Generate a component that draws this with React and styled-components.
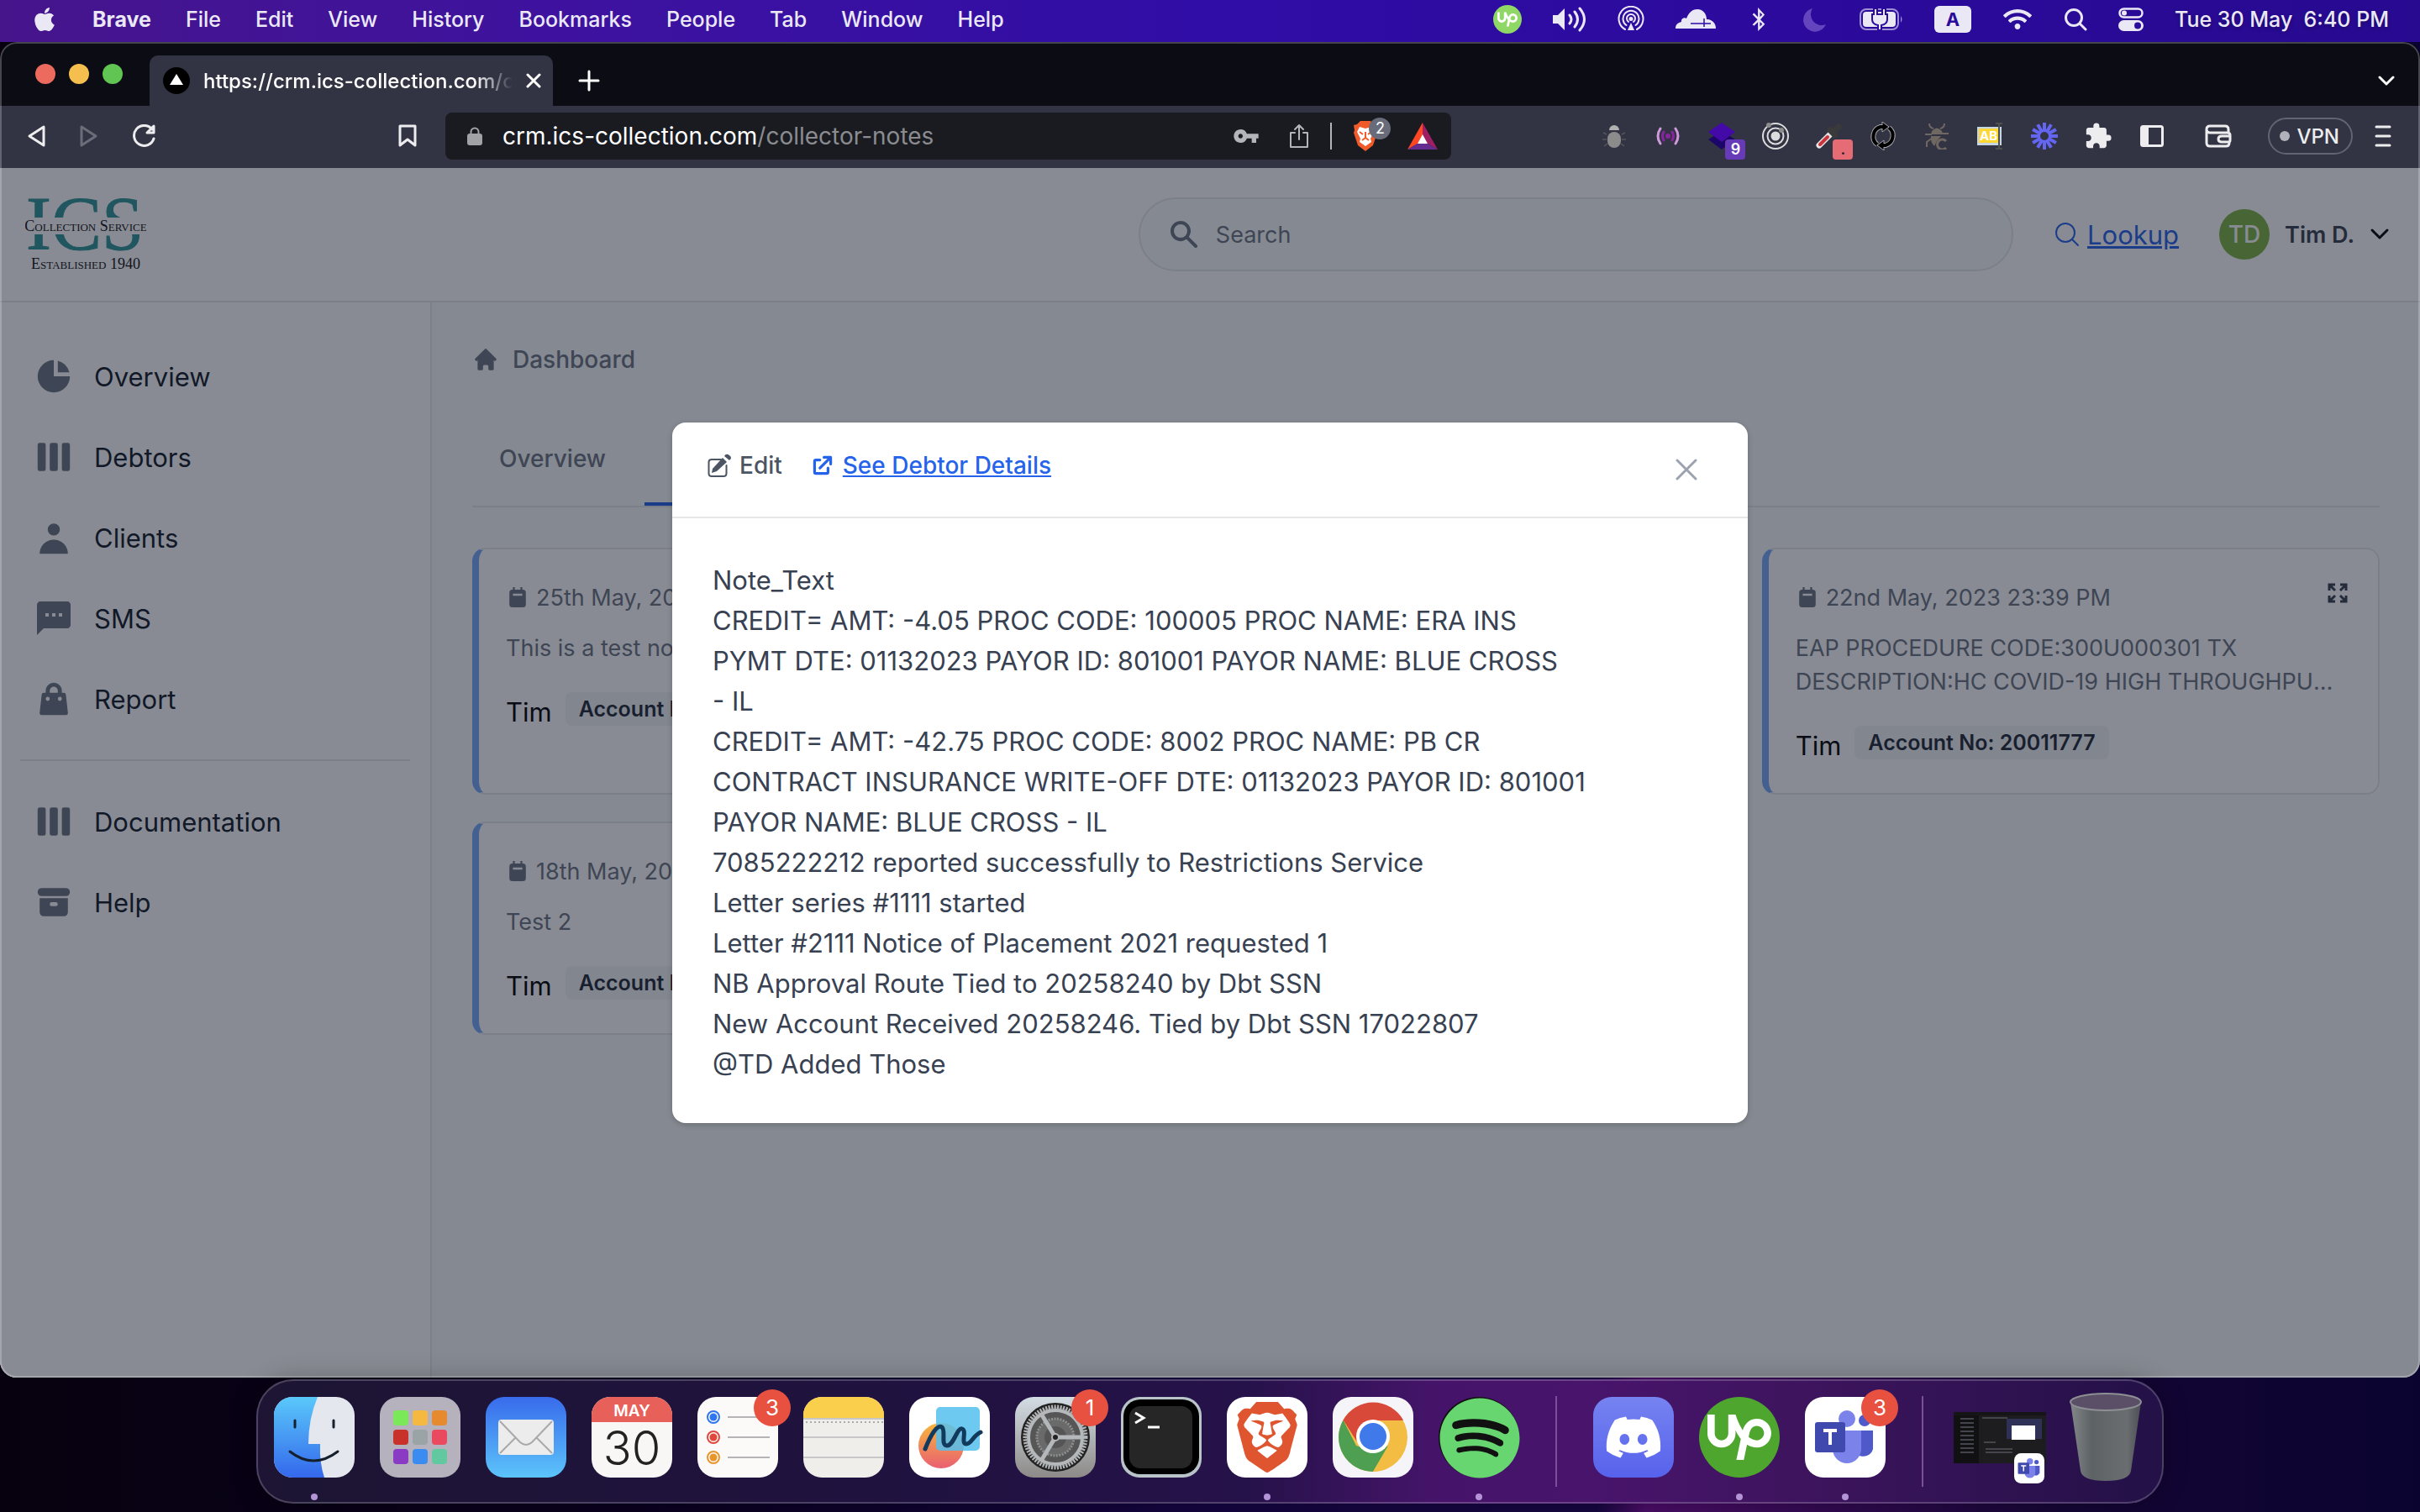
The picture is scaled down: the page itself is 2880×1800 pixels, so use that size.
import React, { useState } from 'react'
import styled, { createGlobalStyle, css } from 'styled-components'
import { FaApple, FaSpotify, FaDiscord, FaBluetoothB, FaWifi } from 'react-icons/fa'
import { SiBrave, SiUpwork } from 'react-icons/si'
import { MdSms, MdVpnKey, MdExtension } from 'react-icons/md'

const menus = ['File', 'Edit', 'View', 'History', 'Bookmarks', 'People', 'Tab', 'Window', 'Help']

const mainLinks = [
    { label: 'Overview', icon: 'pie' },
    { label: 'Debtors', icon: 'boards' },
    { label: 'Clients', icon: 'user' },
    { label: 'SMS', icon: 'sms' },
    { label: 'Report', icon: 'bag' },
]

const moreLinks = [
    { label: 'Documentation', icon: 'boards' },
    { label: 'Help', icon: 'archive' },
]

const notes = [
    { date: '25th May, 2023 20:14 PM', text: 'This is a test note', account: '20011777' },
    { date: '24th May, 2023 18:02 PM', text: 'Note_Text', account: '20258246' },
    {
        date: '22nd May, 2023 23:39 PM',
        text: 'EAP PROCEDURE CODE:300U000301 TX DESCRIPTION:HC COVID-19 HIGH THROUGHPUT TESTING AND REVIEW OF THE SAMPLE',
        account: '20011777',
    },
    { date: '18th May, 2023 20:41 PM', text: 'Test 2', account: '20011777' },
]

const noteLines = [
    'Note_Text',
    'CREDIT= AMT: -4.05 PROC CODE: 100005 PROC NAME: ERA INS',
    'PYMT DTE: 01132023 PAYOR ID: 801001 PAYOR NAME: BLUE CROSS',
    '- IL',
    'CREDIT= AMT: -42.75 PROC CODE: 8002 PROC NAME: PB CR',
    'CONTRACT INSURANCE WRITE-OFF DTE: 01132023 PAYOR ID: 801001',
    'PAYOR NAME: BLUE CROSS - IL',
    '7085222212 reported successfully to Restrictions Service',
    'Letter series #1111 started',
    'Letter #2111 Notice of Placement 2021 requested 1',
    'NB Approval Route Tied to 20258240 by Dbt SSN',
    'New Account Received 20258246. Tied by Dbt SSN 17022807',
    '@TD Added Those',
]

// 20x20 solid icons
const paths = {
    pie: ['M2 10a8 8 0 018-8v8h8a8 8 0 11-16 0z', 'M12 2.252A8.014 8.014 0 0117.748 8H12V2.252z'],
    boards: ['M2 4a1 1 0 011-1h2a1 1 0 011 1v12a1 1 0 01-1 1H3a1 1 0 01-1-1V4zM8 4a1 1 0 011-1h2a1 1 0 011 1v12a1 1 0 01-1 1H9a1 1 0 01-1-1V4zM15 3a1 1 0 00-1 1v12a1 1 0 001 1h2a1 1 0 001-1V4a1 1 0 00-1-1h-2z'],
    user: ['M10 9a3 3 0 100-6 3 3 0 000 6zm-7 9a7 7 0 1114 0H3z'],
    bag: ['M10 2a4 4 0 00-4 4v1H5a1 1 0 00-.994.89l-1 9A1 1 0 004 18h12a1 1 0 00.994-1.11l-1-9A1 1 0 0015 7h-1V6a4 4 0 00-4-4zm2 5V6a2 2 0 10-4 0v1h4zm-6 3a1 1 0 112 0 1 1 0 01-2 0zm7-1a1 1 0 100 2 1 1 0 000-2z'],
    archive: ['M4 3a2 2 0 100 4h12a2 2 0 100-4H4z', 'M3 8h14v7a2 2 0 01-2 2H5a2 2 0 01-2-2V8zm5 3a1 1 0 011-1h2a1 1 0 110 2H9a1 1 0 01-1-1z'],
    home: ['M10.707 2.293a1 1 0 00-1.414 0l-7 7a1 1 0 001.414 1.414L4 10.414V17a1 1 0 001 1h2a1 1 0 001-1v-2a1 1 0 011-1h2a1 1 0 011 1v2a1 1 0 001 1h2a1 1 0 001-1v-6.586l.293.293a1 1 0 001.414-1.414l-7-7z'],
    search: ['M8 4a4 4 0 100 8 4 4 0 000-8zM2 8a6 6 0 1110.89 3.476l4.817 4.817a1 1 0 01-1.414 1.414l-4.816-4.816A6 6 0 012 8z'],
    external: ['M11 3a1 1 0 100 2h2.586l-6.293 6.293a1 1 0 101.414 1.414L15 6.414V9a1 1 0 102 0V4a1 1 0 00-1-1h-5z', 'M5 5a2 2 0 00-2 2v8a2 2 0 002 2h8a2 2 0 002-2v-3a1 1 0 10-2 0v3H5V7h3a1 1 0 000-2H5z'],
    calendar: ['M6 1.5h1.6v2h4.8v-2H14v2h.5A2.5 2.5 0 0117 6v10a2.5 2.5 0 01-2.5 2.5h-9A2.5 2.5 0 013 16V6a2.5 2.5 0 012.5-2.5H6zM6 7v1.8h8V7z'],
}

function Icon({ name, size }) {
    if (name === 'sms') return <MdSms size={size} />
    return (
        <svg width={size} height={size} viewBox="0 0 20 20" fill="currentColor" fillRule="evenodd" aria-hidden="true">
            {paths[name].map((d) => <path key={d} d={d} />)}
        </svg>
    )
}

function Line({ w, h, box, d, stroke = 'currentColor', width = 2 }) {
    return (
        <svg width={w} height={h} viewBox={box} fill="none" stroke={stroke} strokeWidth={width} strokeLinecap="round" strokeLinejoin="round" aria-hidden="true">
            <path d={d} />
        </svg>
    )
}

function StatusIcons() {
    return (
        <>
            <StatusButton $w={34} aria-label="Upwork"><UpDot><SiUpwork size={24} /></UpDot></StatusButton>
            <StatusButton $w={40} aria-label="Sound">
                <svg width="42" height="30" viewBox="0 0 42 30">
                    <path d="M1 10h6l8-8v26l-8-8H1z" fill="#ebe8f6" />
                    <path d="M21 10q4 5 0 10M27 6q7 9 0 18M33 2q11 13 0 26" fill="none" stroke="#ebe8f6" strokeWidth="3" strokeLinecap="round" />
                </svg>
            </StatusButton>
            <StatusButton $w={32} aria-label="AirDrop">
                <svg width="32" height="32" viewBox="0 0 32 32" fill="none" stroke="#ebe8f6" strokeWidth="2">
                    <path d="M9 28a14.5 14.5 0 1114 0M10.5 23a9.5 9.5 0 1111 0M13 19a5 5 0 116 0" strokeLinecap="round" />
                    <circle cx="16" cy="15.5" r="2.5" fill="#ebe8f6" stroke="none" />
                    <path d="M16 20l-4 9h8z" fill="#ebe8f6" stroke="none" />
                </svg>
            </StatusButton>
            <StatusButton $w={48} aria-label="Cloudflare">
                <svg width="48" height="26" viewBox="0 0 48 26">
                    <path d="M0 24c0-5 3-7 7-8-1-4 4-6 6-4C16 4 21 1 26 1c7 0 11 6 11 12 6 0 11 4 11 11z" fill="#ebe8f6" />
                    <path d="M18 18h24M34 12v10" stroke="#2e0ba4" strokeWidth="1.5" />
                </svg>
            </StatusButton>
            <StatusButton $w={28} aria-label="Bluetooth"><FaBluetoothB size={28} /></StatusButton>
            <StatusButton $w={32} $dim aria-label="Focus">
                <svg width="28" height="30" viewBox="0 0 28 30"><path d="M11 2A14 14 0 1027 21 13 13 0 0111 2z" fill="currentColor" /></svg>
            </StatusButton>
            <StatusButton $w={52} aria-label="Battery">
                <svg width="52" height="26" viewBox="0 0 52 26">
                    <rect x="1" y="1" width="45" height="24" rx="7" fill="none" stroke="#9d8fd6" strokeWidth="2" />
                    <rect x="4" y="4" width="39" height="18" rx="4" fill="#ebe8f6" />
                    <path d="M49 9q3 4 0 8z" fill="#9d8fd6" />
                    <path d="M17 0h4v7h6V0h4v7h2v6q0 6-7 7v6h-4v-6q-7-1-7-7V7h2z" fill="#ebe8f6" stroke="#2a0b9c" strokeWidth="2" />
                </svg>
            </StatusButton>
            <StatusButton $w={44} aria-label="Input source"><InputSource>A</InputSource></StatusButton>
            <StatusButton $w={36} aria-label="Wi-Fi"><FaWifi size={34} /></StatusButton>
            <StatusButton $w={28} aria-label="Spotlight">
                <Line w={28} h={28} box="0 0 28 28" d="M2.5 12a9.5 9.5 0 1019 0 9.5 9.5 0 10-19 0M19 19l7 7" width={3} />
            </StatusButton>
            <StatusButton $w={30} aria-label="Control Centre">
                <svg width="30" height="28" viewBox="0 0 30 28">
                    <rect x="1.5" y="1.5" width="27" height="10" rx="5" fill="none" stroke="#ebe8f6" strokeWidth="2.5" />
                    <circle cx="7" cy="6.5" r="3" fill="#ebe8f6" />
                    <rect y="15" width="30" height="13" rx="6.5" fill="#ebe8f6" />
                    <circle cx="23" cy="21.5" r="4" fill="#2a0b9c" />
                </svg>
            </StatusButton>
        </>
    )
}

function Extensions() {
    return (
        <ExtensionRow>
            <ExtButton aria-label="Bug tracker">
                <svg width="28" height="30" viewBox="0 0 28 30">
                    <path d="M5 13l-4-2M5 19H0M6 24l-4 3M23 13l4-2M23 19h5M22 24l4 3" stroke="#55565a" strokeWidth="1.5" />
                    <path d="M8 8a6 6 0 0112 0z" fill="#b0b0b0" />
                    <rect x="6" y="10" width="16" height="19" rx="8" fill="#8b8b8b" />
                </svg>
            </ExtButton>
            <ExtButton aria-label="Broadcast">
                <svg width="28" height="22" viewBox="0 0 28 22" fill="none" strokeWidth="3" strokeLinecap="round">
                    <circle cx="14" cy="11" r="3" fill="#8a24a0" />
                    <path d="M9 6q-3 5 0 10M19 6q3 5 0 10" stroke="#8a24a0" />
                    <path d="M5 2q-6 9 0 18M23 2q6 9 0 18" stroke="#cf9adb" />
                </svg>
            </ExtButton>
            <ExtButton aria-label="Layers">
                <svg width="34" height="34" viewBox="0 0 34 34">
                    <path d="M1 21l16-10 16 10-16 12z" fill="#1c0668" />
                    <path d="M1 12L17 1l16 11-16 12z" fill="#430aa8" />
                </svg>
                <ExtBadge $bg="#673ab7">9</ExtBadge>
            </ExtButton>
            <ExtButton aria-label="Orbit">
                <svg width="34" height="34" viewBox="0 0 34 34" fill="none" stroke="#dcdcdc" strokeWidth="2">
                    <circle cx="17" cy="17" r="15" /><circle cx="17" cy="17" r="9.5" />
                    <circle cx="17" cy="17" r="4.5" fill="#dcdcdc" />
                    <circle cx="9" cy="4" r="3" fill="#8c8c8c" stroke="none" /><circle cx="24" cy="10" r="3" fill="#8c8c8c" stroke="none" />
                </svg>
            </ExtButton>
            <ExtButton aria-label="Colour picker">
                <svg width="32" height="32" viewBox="0 0 32 32" strokeLinecap="round">
                    <path d="M4 27L19 12" stroke="#e6e6e6" strokeWidth="7" />
                    <path d="M5 26L14 17" stroke="#c9353c" strokeWidth="4" />
                    <path d="M17 9l6 6M20 12l7-7" stroke="#3a3a3a" strokeWidth="7" />
                </svg>
                <ExtBadge $bg="#e56b75" $dark>.</ExtBadge>
            </ExtButton>
            <ExtButton aria-label="Refresh cache">
                <svg width="32" height="34" viewBox="0 0 32 34" fill="none">
                    <path d="M9 27A12 12 0 0113 6h5M23 7a12 12 0 01-4 21h-5" stroke="#a5a6ac" strokeWidth="6" />
                    <path d="M15 0l8 6-8 6zM17 22l-8 6 8 6z" fill="#000" stroke="#a5a6ac" />
                    <path d="M9 27A12 12 0 0113 6h5M23 7a12 12 0 01-4 21h-5" stroke="#000" strokeWidth="4" />
                </svg>
            </ExtButton>
            <ExtButton aria-label="Debugger">
                <svg width="30" height="32" viewBox="0 0 30 32" fill="none" stroke="#6f6761" strokeWidth="2">
                    <path d="M6 1q0 5 5 6M24 1q0 5-5 6M9 14H1M10 18l-7 5v6M21 13h8" />
                    <path d="M9 10q6-7 12 0l1 4H8zM8 16h12l-5 6-3 6q-5-5-4-12z" fill="#6f6761" stroke="none" />
                    <path d="M26 22a6 6 0 100 8" strokeWidth="3" />
                </svg>
            </ExtButton>
            <ExtButton aria-label="Text tool">
                <svg width="32" height="32" viewBox="0 0 32 32">
                    <rect y="5" width="29" height="22" fill="#c6d5e4" /><rect x="2" y="7" width="25" height="17" fill="#fdd835" />
                    <text x="3" y="21" fontFamily="Inter, sans-serif" fontSize="15" fontWeight="700" fill="#fff">AB</text>
                    <path d="M22 1h8M26 1v30M22 31h8" stroke="#4d5150" strokeWidth="2" />
                </svg>
            </ExtButton>
            <ExtButton aria-label="Loom">
                <svg width="32" height="32" viewBox="0 0 32 32" stroke="#6466f1" strokeWidth="4">
                    {[0, 30, 60, 90, 120, 150, 180, 210, 240, 270, 300, 330].map((a) => (
                        <path key={a} d="M16 0v10" transform={`rotate(${a} 16 16)`} />
                    ))}
                    <circle cx="16" cy="16" r="6.5" fill="none" strokeWidth="3" />
                </svg>
            </ExtButton>
            <ExtButton aria-label="Extensions"><MdExtension size={34} /></ExtButton>
            <ExtButton aria-label="Side panel">
                <svg width="28" height="26" viewBox="0 0 28 26"><rect x="1.5" y="1.5" width="25" height="23" rx="2" fill="none" stroke="#ededef" strokeWidth="3" /><rect x="2" y="2" width="8" height="22" fill="#ededef" /></svg>
            </ExtButton>
            <ExtButton $wide aria-label="Wallet">
                <svg width="32" height="28" viewBox="0 0 32 28" fill="none" stroke="#ededef" strokeWidth="3">
                    <path d="M28 9V6q0-4-4-4H6Q2 2 2 6v16q0 4 4 4h19q4 0 4-4M2 7q1 3 4 3h21q3 0 3 3v6q0 2-2 2h-8q-4 0-4-3.5T20 14h10" />
                </svg>
            </ExtButton>
        </ExtensionRow>
    )
}

function Logo() {
    return (
        <svg width="144" height="92" viewBox="0 0 144 92" role="img" aria-label="ICS Collection Service" fontFamily="'Liberation Serif', serif">
            <text x="71" y="64" textAnchor="middle" fontSize="90" fill="#2f9496" stroke="#2f9496" strokeWidth="1">ICS</text>
            <rect y="26" width="144" height="20" fill="#fff" />
            <text x="72" y="42" textAnchor="middle" fontSize="18" fill="#111" style={{ fontVariant: 'small-caps' }}>Collection Service</text>
            <text x="72" y="87" textAnchor="middle" fontSize="18" fill="#111" style={{ fontVariant: 'small-caps' }}>Established 1940</text>
        </svg>
    )
}

function NoteCard({ note }) {
    return (
        <Card>
            <CardTop>
                <CardDate><Icon name="calendar" size={28} />{note.date}</CardDate>
                <ExpandButton aria-label="Expand note">
                    <svg width="24" height="24" viewBox="0 0 24 24" fill="none" stroke="#374151" strokeWidth="3">
                        <path d="M2 9V2h7M2 2l7 7M15 2h7v7M22 2l-7 7M2 15v7h7M2 22l7-7M22 15v7h-7M22 22l-7-7" />
                    </svg>
                </ExpandButton>
            </CardTop>
            <CardText>{note.text}</CardText>
            <CardFoot>
                <span>Tim</span>
                <AccountTag>Account No: {note.account}</AccountTag>
            </CardFoot>
        </Card>
    )
}

function Teams({ size }) {
    return (
        <svg width={size} height={size} viewBox="0 0 96 96">
            <rect width="96" height="96" rx="22" fill="#fff" />
            <circle cx="71" cy="28" r="7" fill="#5059c9" />
            <path d="M58 40h23v22a12 12 0 01-18 7z" fill="#5059c9" />
            <circle cx="50" cy="26" r="10" fill="#7b83eb" />
            <path d="M33 40h34v22a17 17 0 01-34 0z" fill="#7b83eb" />
            <rect x="12" y="30" width="36" height="36" rx="3" fill="#4049ad" />
            <path d="M22 40h16M30 40v17" stroke="#fff" strokeWidth="4" />
        </svg>
    )
}

function Art({ children }) {
    return <svg width="96" height="96" viewBox="0 0 96 96">{children}</svg>
}

const Tile = styled.span`
    width: 96px;
    height: 96px;
    border-radius: ${(p) => (p.$round ? '50%' : '22px')};
    display: grid;
    place-items: center;
    background: ${(p) => p.$bg};
    color: ${(p) => p.$color};
`

const launchColors = ['#7be85a', '#f5b942', '#e58a2e', '#c8322a', '#9aa3a6', '#ea4a60', '#8a3bc4', '#3b8cf0', '#62c8a0']

const dockApps = [
    {
        name: 'Finder', running: true, art: (
            <Art>
                <defs>
                    <linearGradient id="finderBlue" x1="0" y1="0" x2="0" y2="1"><stop offset="0" stopColor="#5ac8fa" /><stop offset="1" stopColor="#3468ec" /></linearGradient>
                    <clipPath id="finderClip"><rect width="96" height="96" rx="22" /></clipPath>
                </defs>
                <g clipPath="url(#finderClip)">
                    <rect width="96" height="96" fill="#e4e7ed" />
                    <path d="M0 0h52Q41 26 41 56h14q-1 22 5 40H0z" fill="url(#finderBlue)" />
                </g>
                <path d="M25 28v8M71 28v8M19 65q28 22 57 0" fill="none" stroke="#16202c" strokeWidth="3" strokeLinecap="round" />
            </Art>
        )
    },
    {
        name: 'Launchpad', art: (
            <Art>
                <rect width="96" height="96" rx="22" fill="#b5b2bd" />
                {launchColors.map((c, i) => <rect key={c} x={16 + (i % 3) * 23} y={16 + Math.floor(i / 3) * 23} width="18" height="18" rx="4" fill={c} />)}
            </Art>
        )
    },
    {
        name: 'Mail', art: (
            <Art>
                <defs><linearGradient id="mailBg" x1="0" y1="0" x2="0" y2="1"><stop offset="0" stopColor="#386bec" /><stop offset="1" stopColor="#5cc4fa" /></linearGradient></defs>
                <rect width="96" height="96" rx="22" fill="url(#mailBg)" />
                <rect x="15" y="27" width="66" height="42" rx="4" fill="#ececec" />
                <path d="M17 67l19-19M79 67L60 48M17 29l24 25q7 6 14 0l24-25" fill="none" stroke="#a9a9a9" strokeWidth="2" />
            </Art>
        )
    },
    {
        name: 'Calendar', art: (
            <Art>
                <rect width="96" height="96" rx="22" fill="#f8f7f5" />
                <path d="M0 30v-8A22 22 0 0122 0h52a22 22 0 0122 22v8z" fill="#e8605a" />
                <text x="48" y="23" textAnchor="middle" fontFamily="Inter, sans-serif" fontSize="19" fontWeight="600" fill="#fff">MAY</text>
                <text x="48" y="81" textAnchor="middle" fontFamily="Inter, sans-serif" fontSize="56" fontWeight="300" fill="#222">30</text>
            </Art>
        )
    },
    {
        name: 'Reminders', badge: 3, art: (
            <Art>
                <rect width="96" height="96" rx="22" fill="#fbfaf8" />
                {['#2f76f0', '#e0483e', '#e8952c'].map((c, i) => (
                    <g key={c}>
                        <circle cx="19" cy={24 + i * 24} r="7" fill="none" stroke={c} strokeWidth="2" />
                        <circle cx="19" cy={24 + i * 24} r="4.5" fill={c} />
                        <path d={`M36 ${24 + i * 24}h50`} stroke="#b5b5b8" strokeWidth="2" />
                    </g>
                ))}
            </Art>
        )
    },
    {
        name: 'Notes', art: (
            <Art>
                <rect width="96" height="96" rx="22" fill="#efeeea" />
                <path d="M0 25v-3A22 22 0 0122 0h52a22 22 0 0122 22v3z" fill="#f9cf4b" />
                <path d="M0 26h96M0 48h96M0 72h96" stroke="#c9c8c8" strokeWidth="2" />
                <path d="M3 30h92" stroke="#aaa" strokeWidth="2" strokeDasharray="2 3" />
            </Art>
        )
    },
    {
        name: 'Freeform', art: (
            <Art>
                <defs><linearGradient id="freeBall" x1="0" y1="0" x2="0" y2="1"><stop offset="0" stopColor="#f6b73c" /><stop offset="1" stopColor="#ea5f72" /></linearGradient></defs>
                <rect width="96" height="96" rx="22" fill="#fff" />
                <circle cx="38" cy="58" r="27" fill="url(#freeBall)" />
                <rect x="32" y="12" width="52" height="52" rx="5" fill="#55bfee" opacity="0.85" />
                <path d="M19 62C26 44 34 32 39 36s-2 22 6 22 12-22 18-20-2 18 5 18c6 0 8-10 17-14" fill="none" stroke="#123a5c" strokeWidth="5" strokeLinecap="round" />
            </Art>
        )
    },
    {
        name: 'System Settings', badge: 1, art: (
            <Art>
                <defs><linearGradient id="setBg" x1="0" y1="0" x2="0" y2="1"><stop offset="0" stopColor="#d3dde4" /><stop offset="1" stopColor="#8d8a88" /></linearGradient></defs>
                <rect width="96" height="96" rx="22" fill="url(#setBg)" />
                <circle cx="48" cy="48" r="41" fill="#222" />
                <circle cx="48" cy="48" r="36" fill="#565656" stroke="#b5b8ba" strokeWidth="5" strokeDasharray="2 1.5" />
                <circle cx="48" cy="48" r="32" fill="none" stroke="#b5b8ba" strokeWidth="4" />
                <circle cx="48" cy="48" r="22" fill="#6a6a6a" stroke="#8d8f90" strokeWidth="3" strokeDasharray="2 1.5" />
                <circle cx="48" cy="48" r="13" fill="#555" />
                <path d="M48 48h33M48 48L31 20M48 48L31 76" stroke="#b5b8ba" strokeWidth="5" />
                <circle cx="48" cy="48" r="4" fill="#222" stroke="#b5b8ba" strokeWidth="2" />
            </Art>
        )
    },
    {
        name: 'Terminal', art: (
            <Art>
                <rect width="96" height="96" rx="22" fill="#b9c4c9" />
                <rect x="3" y="3" width="90" height="89" rx="20" fill="#000" />
                <rect x="10" y="11" width="75" height="74" rx="13" fill="#262626" />
                <path d="M17 19l10 6-10 6M32 36h14" fill="none" stroke="#fff" strokeWidth="3" />
            </Art>
        )
    },
    {
        name: 'Brave', running: true, art: (
            <Tile $bg="#fff" $color="#df5530"><SiBrave size={84} /></Tile>
        )
    },
    {
        name: 'Chrome', art: (
            <Art>
                <rect width="96" height="96" rx="22" fill="#f5f4f8" />
                <circle cx="48" cy="48" r="41" fill="#f2bd42" />
                <path d="M48 48l36-20.5A41 41 0 0012.500 27.500L28 52z" fill="#d8493a" />
                <path d="M12.500 27.500A41 41 0 0048 89l19-31-19 7-20-7z" fill="#4f9f52" />
                <path d="M48 28h35a41 41 0 01-35 61l18-31z" fill="#f2bd42" />
                <circle cx="48" cy="47" r="20" fill="#fff" />
                <circle cx="48" cy="47" r="16" fill="#4079ea" />
            </Art>
        )
    },
    {
        name: 'Spotify', running: true, art: (
            <Tile $bg="#111" $color="#67d671" $round><FaSpotify size={98} /></Tile>
        )
    },
]

const dockExtra = [
    { name: 'Discord', art: <Tile $bg="linear-gradient(#7683f0, #5762ec)" $color="#fff"><FaDiscord size={70} /></Tile> },
    { name: 'Upwork', running: true, art: <Tile $bg="#4fa62f" $color="#fff" $round><SiUpwork size={76} /></Tile> },
    { name: 'Microsoft Teams', running: true, badge: 3, art: <Teams size={96} /> },
]

function DockItem({ app }) {
    return (
        <DockButton aria-label={app.name}>
            {app.art}
            {app.badge && <DockBadge>{app.badge}</DockBadge>}
            {app.running && <RunningDot />}
        </DockButton>
    )
}

function App() {
    const [open, setOpen] = useState(true)
    const [query, setQuery] = useState('')

    return (
        <Desktop>
            <GlobalStyle />
            <MenuBar>
                <MenuList>
                    <MenuButton aria-label="Apple"><FaApple size={32} /></MenuButton>
                    <MenuButton $bold>Brave</MenuButton>
                    {menus.map((m) => <MenuButton key={m}>{m}</MenuButton>)}
                </MenuList>
                <StatusList>
                    <StatusIcons />
                    <Clock>Tue 30 May&nbsp; 6:40 PM</Clock>
                </StatusList>
            </MenuBar>

            <BrowserWindow>
                <TabStrip>
                    <Lights>
                        <Light $c="#ed6a5e" aria-label="Close window" />
                        <Light $c="#f5bf4f" aria-label="Minimise window" />
                        <Light $c="#61c554" aria-label="Zoom window" />
                    </Lights>
                    <BrowserTab>
                        <svg width="32" height="32" viewBox="0 0 32 32"><circle cx="16" cy="16" r="16" fill="#000" /><path d="M16 8l8 13H8z" fill="#fff" /></svg>
                        <TabTitle>https://crm.ics-collection.com/c</TabTitle>
                        <IconButton aria-label="Close tab"><Line w={18} h={18} box="0 0 18 18" d="M2 2l14 14M16 2L2 16" width={3} /></IconButton>
                    </BrowserTab>
                    <IconButton aria-label="New tab"><Line w={26} h={26} box="0 0 26 26" d="M13 2v22M2 13h22" width={3} /></IconButton>
                    <TabSearch aria-label="Search tabs"><Line w={20} h={12} box="0 0 20 12" d="M2 2l8 8 8-8" width={3} /></TabSearch>
                </TabStrip>

                <Toolbar>
                    <NavGroup>
                        <IconButton aria-label="Back"><Line w={22} h={26} box="0 0 22 26" d="M20 2v22L3 13z" width={3} /></IconButton>
                        <IconButton $dim aria-label="Forward"><Line w={22} h={26} box="0 0 22 26" d="M2 2v22l17-11z" width={3} /></IconButton>
                        <IconButton aria-label="Reload"><Line w={28} h={28} box="0 0 28 28" d="M25 17A12 12 0 1123 6M25 2v8h-8z" width={3} /></IconButton>
                        <BookmarkButton aria-label="Bookmark"><Line w={22} h={28} box="0 0 22 28" d="M2 2h18v23l-9-7-9 7z" width={3} /></BookmarkButton>
                    </NavGroup>
                    <AddressBar>
                        <svg width="18" height="22" viewBox="0 0 18 22"><rect y="8" width="18" height="14" rx="3" fill="#a0a2a6" /><path d="M4.5 9V6a4.5 4.5 0 019 0v3" fill="none" stroke="#a0a2a6" strokeWidth="2" /></svg>
                        <Url><b>crm.ics-collection.com</b>/collector-notes</Url>
                        <KeyButton $grey aria-label="Passwords"><MdVpnKey size={32} /></KeyButton>
                        <IconButton $grey aria-label="Share"><Line w={26} h={30} box="0 0 26 30" d="M8 11H3v17h20V11h-5M13 19V2M8 7l5-5 5 5" width={2} /></IconButton>
                        <Rule />
                        <Shield aria-label="Brave Shields">
                            <svg width="32" height="36" viewBox="0 0 32 36">
                                <path d="M6 4l4-4h12l4 4 4 1-1 6 1 3-5 15-9 7-9-7L2 14l1-3-1-6z" fill="#f15a29" />
                                <path d="M9 7l7 2 7-2 3 6-4 8 1 4-7 5-7-5 1-4-4-8z" fill="#fff" />
                                <path d="M16 13v7M9 13l4 3M23 13l-4 3M12 23l4-3 4 3" stroke="#f15a29" strokeWidth="2" fill="none" />
                            </svg>
                            <ShieldCount>2</ShieldCount>
                        </Shield>
                        <IconButton aria-label="Rewards">
                            <svg width="36" height="32" viewBox="0 0 36 32"><path d="M18 0L0 32l12-7 6-10z" fill="#ff4724" /><path d="M18 0l18 32-12-7-6-10z" fill="#9e1f63" /><path d="M0 32h36l-12-7H12z" fill="#662d91" /><path d="M18 14l6 11H12z" fill="#fff" /></svg>
                        </IconButton>
                    </AddressBar>
                    <Extensions />
                    <Vpn><i />VPN</Vpn>
                    <IconButton aria-label="Menu"><Line w={20} h={26} box="0 0 20 26" d="M2 2h16M2 13h16M2 24h16" width={3} /></IconButton>
                </Toolbar>

                <Page>
                    <PageHeader>
                        <a href="#home"><Logo /></a>
                        <SearchBox>
                            <Icon name="search" size={40} />
                            <input type="text" aria-label="Search" placeholder="Search" value={query} onChange={(e) => setQuery(e.target.value)} />
                        </SearchBox>
                        <Lookup href="#lookup">
                            <Line w={32} h={32} box="0 0 32 32" d="M3 14a11 11 0 1022 0 11 11 0 10-22 0M22 22l7 7" width={2} />
                            <span>Lookup</span>
                        </Lookup>
                        <Profile>
                            <Avatar>TD</Avatar>
                            Tim D.
                            <Line w={24} h={16} box="0 0 24 16" d="M3 3l9 9 9-9" stroke="#000" width={3} />
                        </Profile>
                    </PageHeader>

                    <Columns>
                        <Sidebar>
                            <NavList>
                                {mainLinks.map((l) => (
                                    <li key={l.label}><NavLink href={`#${l.label}`}><Icon name={l.icon} size={48} />{l.label}</NavLink></li>
                                ))}
                            </NavList>
                            <NavList $ruled>
                                {moreLinks.map((l) => (
                                    <li key={l.label}><NavLink href={`#${l.label}`}><Icon name={l.icon} size={48} />{l.label}</NavLink></li>
                                ))}
                            </NavList>
                        </Sidebar>
                        <Main>
                            <Breadcrumb href="#dashboard"><Icon name="home" size={32} />Dashboard</Breadcrumb>
                            <PageTabs>
                                <PageTab>Overview</PageTab>
                                <PageTab $active>Notes</PageTab>
                            </PageTabs>
                            <Cards>
                                {notes.map((n) => <NoteCard key={n.date} note={n} />)}
                            </Cards>
                        </Main>
                    </Columns>

                    {open && (
                        <Overlay>
                            <Modal role="dialog" aria-label="Note">
                                <ModalHeader>
                                    <EditButton>
                                        <svg width="28" height="28" viewBox="0 0 28 28" fill="none" stroke="currentColor" strokeWidth="2">
                                            <path d="M16 7H5Q1.5 7 1.5 10v13.500Q1.5 27 5 27h14q3.500 0 3.500-3.500V14" strokeLinecap="round" />
                                            <path d="M6 18L18 5l5 5L11 21l-6 2z" fill="currentColor" stroke="none" />
                                            <path d="M20 3q2-4 6-1t0 6z" fill="currentColor" stroke="none" />
                                        </svg>
                                        Edit
                                    </EditButton>
                                    <DetailsLink href="#debtor"><Icon name="external" size={32} /><span>See Debtor Details</span></DetailsLink>
                                    <CloseButton aria-label="Close" onClick={() => setOpen(false)}>
                                        <Line w={26} h={26} box="0 0 26 26" d="M2 2l22 22M24 2L2 24" width={3} />
                                    </CloseButton>
                                </ModalHeader>
                                <ModalBody>
                                    {noteLines.map((l) => <p key={l}>{l}</p>)}
                                </ModalBody>
                            </Modal>
                        </Overlay>
                    )}
                </Page>
            </BrowserWindow>

            <DockArea>
                <Dock>
                    {dockApps.map((a) => <DockItem key={a.name} app={a} />)}
                    <DockRule />
                    {dockExtra.map((a) => <DockItem key={a.name} app={a} />)}
                    <DockRule />
                    <DockButton aria-label="Minimised window">
                        <svg width="110" height="96" viewBox="0 0 110 96">
                            <rect y="18" width="110" height="61" fill="#1d1d1f" />
                            <rect y="18" width="30" height="61" fill="#111113" />
                            <rect y="18" width="110" height="4" fill="#151517" />
                            {[26, 31, 36, 41, 46, 51, 56, 61, 66].map((y) => <path key={y} d={`M8 ${y}h16`} stroke="#44454c" strokeWidth="2" />)}
                            <path d="M34 25h30M36 54h14M38 62h32M38 66h32" stroke="#44454c" strokeWidth="2" />
                            <rect x="63" y="26" width="42" height="24" fill="#2f3055" />
                            <rect x="69" y="34" width="28" height="17" fill="#fff" />
                        </svg>
                        <MiniApp><Teams size={36} /></MiniApp>
                    </DockButton>
                    <DockButton aria-label="Bin">
                        <svg width="86" height="106" viewBox="0 0 86 106">
                            <defs><linearGradient id="bin"><stop offset="0" stopColor="#83878a" /><stop offset="0.3" stopColor="#5d6265" /><stop offset="0.8" stopColor="#6a6e71" /><stop offset="1" stopColor="#4b4e52" /></linearGradient></defs>
                            <path d="M1 11l12 82q2 12 30 12t30-12l12-82z" fill="url(#bin)" />
                            <ellipse cx="43" cy="11" rx="42" ry="10" fill="#5b4f68" stroke="#8d8f94" strokeWidth="2" />
                        </svg>
                    </DockButton>
                </Dock>
            </DockArea>
        </Desktop>
    )
}

const GlobalStyle = createGlobalStyle`
    *{
        box-sizing: border-box;
    }
    body{
        margin: 0;
        font-family: Inter, "Liberation Sans", sans-serif;
    }
    button{
        font: inherit;
        color: inherit;
        background: none;
        border: 0;
        padding: 0;
        cursor: pointer;
    }
    svg{
        display: block;
        flex: none;
    }
    p, ul{
        margin: 0;
        padding: 0;
        list-style: none;
    }
`

const Desktop = styled.div`
    min-height: 100vh;
    display: flex;
    flex-direction: column;
    background: linear-gradient(90deg, #07010f 0%, #0a0220 28%, #140540 50%, #16063f 66%, #4a0d66 68%, #30094f 76%, #150635 85%, #0a0330 100%);
`

const MenuBar = styled.header`
    height: 50px;
    padding: 0 37px 4px;
    display: flex;
    align-items: center;
    justify-content: space-between;
    color: #ebe8f6;
    font-size: 25px;
    font-weight: 500;
    background: linear-gradient(90deg, #46158c 0%, #3d12a0 25%, #300da6 50%, #2b0a9c 75%, #270a90 100%);
    text-shadow: 0 2px 4px rgba(0, 0, 0, 0.3);
`

const MenuList = styled.nav`
    display: flex;
    align-items: center;
    gap: 41px;
`

const MenuButton = styled.button`
    font-weight: ${(p) => (p.$bold ? 700 : 500)};
    white-space: nowrap;
`

const StatusList = styled.div`
    display: flex;
    align-items: center;
    gap: 37px;
`

const StatusButton = styled.button`
    width: ${(p) => p.$w}px;
    display: flex;
    justify-content: center;
    color: ${(p) => (p.$dim ? '#6445bd' : '#ebe8f6')};
`

const UpDot = styled.span`
    width: 34px;
    height: 34px;
    border-radius: 50%;
    display: grid;
    place-items: center;
    background: #8fd866;
    color: #fff;
`

const InputSource = styled.span`
    width: 44px;
    height: 32px;
    border-radius: 6px;
    background: #ebe8f6;
    color: #2a0b9c;
    font-size: 22px;
    font-weight: 700;
    line-height: 32px;
    text-shadow: none;
`

const Clock = styled.time`
    white-space: nowrap;
`

const BrowserWindow = styled.section`
    flex: 1;
    display: flex;
    flex-direction: column;
    position: relative;
    border-radius: 20px;
    overflow: hidden;
    background: #0b0c14;
    &::after{
        content: "";
        position: absolute;
        inset: 0;
        border: 2px solid rgba(255, 255, 255, 0.24);
        border-radius: 20px;
        pointer-events: none;
    }
`

const TabStrip = styled.div`
    height: 76px;
    padding: 16px 30px 0 42px;
    display: flex;
    align-items: center;
    color: #fff;
`

const Lights = styled.div`
    display: flex;
    gap: 16px;
    margin-right: 32px;
    padding-bottom: 16px;
`

const Light = styled.button`
    width: 24px;
    height: 24px;
    border-radius: 50%;
    background: ${(p) => p.$c};
`

const BrowserTab = styled.div`
    width: 480px;
    height: 60px;
    padding: 0 14px 0 16px;
    margin-right: 30px;
    display: flex;
    align-items: center;
    gap: 16px;
    border-radius: 10px 10px 0 0;
    background: #323443;
`

const TabTitle = styled.span`
    flex: 1;
    overflow: hidden;
    white-space: nowrap;
    font-size: 24px;
    font-weight: 500;
    mask-image: linear-gradient(90deg, #000 88%, transparent 100%);
`

const TabSearch = styled.button`
    margin-left: auto;
`

const Toolbar = styled.div`
    height: 74px;
    padding: 0 34px 2px 32px;
    display: flex;
    align-items: center;
    color: #ededef;
    background: #323443;
`

const IconButton = styled.button`
    ${(p) => p.$dim && css`color: #6b6d79;`}
    ${(p) => p.$grey && css`color: #b4b5b9;`}
`

const KeyButton = styled(IconButton)`
    margin-right: 10px;
`

const NavGroup = styled.div`
    width: 464px;
    margin-right: 34px;
    display: flex;
    align-items: center;
    gap: 41px;
`

const BookmarkButton = styled.button`
    margin-left: auto;
`

const AddressBar = styled.div`
    flex: 1;
    height: 56px;
    margin-right: 162px;
    padding: 0 16px 0 26px;
    display: flex;
    align-items: center;
    gap: 24px;
    border-radius: 8px;
    background: #191b20;
`

const Url = styled.span`
    flex: 1;
    color: #8b8c90;
    font-size: 28px;
    white-space: nowrap;
    b{
        color: #fff;
        font-weight: 400;
    }
`

const Rule = styled.span`
    width: 2px;
    height: 32px;
    background: #b4b5b9;
`

const Shield = styled.button`
    position: relative;
    margin-right: 10px;
`

const ShieldCount = styled.span`
    position: absolute;
    top: -4px;
    left: 20px;
    width: 26px;
    height: 26px;
    border-radius: 50%;
    background: #686b7a;
    color: #fff;
    font-size: 18px;
    line-height: 26px;
`

const ExtensionRow = styled.div`
    display: flex;
    align-items: center;
`

const ExtButton = styled.button`
    position: relative;
    width: ${(p) => (p.$wide ? 94 : 64)}px;
    height: 56px;
    display: grid;
    place-items: center;
`

const ExtBadge = styled.span`
    position: absolute;
    right: 4px;
    bottom: 0;
    width: 24px;
    height: 24px;
    border-radius: 4px;
    background: ${(p) => p.$bg};
    color: ${(p) => (p.$dark ? '#222' : '#fff')};
    font-size: 18px;
    font-weight: 600;
    line-height: 24px;
`

const Vpn = styled.button`
    height: 44px;
    padding: 0 14px 0 12px;
    margin: 0 26px 0 12px;
    display: flex;
    align-items: center;
    gap: 8px;
    border: 2px solid #626472;
    border-radius: 22px;
    font-size: 24px;
    font-weight: 500;
    i{
        width: 12px;
        height: 12px;
        border-radius: 50%;
        background: #b0b1bb;
    }
`

const Page = styled.div`
    flex: 1;
    position: relative;
    display: flex;
    flex-direction: column;
    background: #f9fafb;
`

const PageHeader = styled.header`
    height: 160px;
    padding: 0 36px 0 30px;
    display: flex;
    align-items: center;
    border-bottom: 2px solid #e5e7eb;
    background: #fff;
`

const SearchBox = styled.label`
    width: 37%;
    height: 88px;
    margin: 0 48px 0 auto;
    padding: 0 32px;
    display: flex;
    align-items: center;
    gap: 16px;
    border: 2px solid #e5e7eb;
    border-radius: 44px;
    background: #f9fafb;
    color: #6b7280;
    input{
        flex: 1;
        border: 0;
        outline: 0;
        background: none;
        font: inherit;
        font-size: 27px;
    }
    input::placeholder{
        color: #6b7280;
    }
`

const Lookup = styled.a`
    display: flex;
    align-items: center;
    gap: 8px;
    margin-right: 48px;
    color: #2563eb;
    font-size: 31px;
    text-decoration: none;
    span{
        text-decoration: underline;
    }
`

const Profile = styled.button`
    display: flex;
    align-items: center;
    gap: 18px;
    color: #374151;
    font-size: 27px;
    font-weight: 600;
    white-space: nowrap;
`

const Avatar = styled.span`
    width: 60px;
    height: 60px;
    border-radius: 50%;
    background: #7cb342;
    color: #fff;
    font-size: 28px;
    font-weight: 500;
    line-height: 60px;
`

const Columns = styled.div`
    flex: 1;
    display: flex;
`

const Sidebar = styled.aside`
    width: 514px;
    flex: none;
    padding: 48px 24px;
    border-right: 2px solid #e5e7eb;
    background: #fff;
`

const NavList = styled.ul`
    display: grid;
    gap: 16px;
    ${(p) => p.$ruled && css`
        margin-top: 32px;
        padding-top: 32px;
        border-top: 2px solid #e5e7eb;
    `}
`

const NavLink = styled.a`
    height: 80px;
    padding: 0 16px;
    display: flex;
    align-items: center;
    gap: 24px;
    color: #111827;
    font-size: 31px;
    text-decoration: none;
    svg{
        color: #6b7280;
    }
`

const Main = styled.main`
    flex: 1;
    min-width: 0;
    padding: 48px;
`

const Breadcrumb = styled.a`
    display: flex;
    align-items: center;
    gap: 16px;
    color: #6b7280;
    font-size: 28px;
    font-weight: 500;
    line-height: 40px;
    text-decoration: none;
`

const PageTabs = styled.div`
    margin: 46px 0 48px;
    display: flex;
    gap: 14px;
    border-bottom: 2px solid #e5e7eb;
`

const PageTab = styled.button`
    padding: 32px;
    border-bottom: 4px solid ${(p) => (p.$active ? '#2563eb' : 'transparent')};
    color: #6b7280;
    font-size: 28px;
    font-weight: 500;
    line-height: 40px;
`

const Cards = styled.div`
    display: grid;
    grid-template-columns: repeat(3, 1fr);
    gap: 32px;
`

const Card = styled.article`
    padding: 32px;
    border: 2px solid #e5e7eb;
    border-left: 8px solid #76a9fa;
    border-radius: 16px;
    background: #fff;
`

const CardTop = styled.div`
    height: 50px;
    margin-bottom: 16px;
    padding-right: 4px;
    display: flex;
    align-items: center;
    justify-content: space-between;
`

const ExpandButton = styled.button`
    align-self: flex-start;
    padding-top: 8px;
`

const CardDate = styled.div`
    display: flex;
    align-items: center;
    gap: 8px;
    color: #6b7280;
    font-size: 27px;
`

const CardText = styled.p`
    margin-bottom: 32px;
    padding-right: 8px;
    display: -webkit-box;
    -webkit-line-clamp: 2;
    -webkit-box-orient: vertical;
    overflow: hidden;
    color: #6b7280;
    font-size: 27px;
    line-height: 40px;
`

const CardFoot = styled.div`
    display: flex;
    align-items: flex-start;
    gap: 16px;
    font-size: 31px;
    line-height: 48px;
`

const AccountTag = styled.span`
    padding: 4px 16px;
    border-radius: 8px;
    background: #f3f4f6;
    color: #1f2937;
    font-size: 25px;
    font-weight: 600;
    line-height: 32px;
`

const Overlay = styled.div`
    position: absolute;
    inset: 0;
    display: flex;
    align-items: center;
    justify-content: center;
    background: rgba(17, 24, 39, 0.5);
`

const Modal = styled.div`
    width: 100%;
    max-width: 1280px;
    border-radius: 16px;
    background: #fff;
    box-shadow: 0 2px 6px rgba(0, 0, 0, 0.2);
`

const ModalHeader = styled.div`
    height: 114px;
    padding: 0 60px 0 42px;
    display: flex;
    align-items: center;
    border-bottom: 2px solid #e5e7eb;
    font-size: 28px;
    font-weight: 500;
`

const EditButton = styled.button`
    display: flex;
    align-items: center;
    gap: 10px;
    margin-right: 32px;
    padding-bottom: 10px;
    color: #4b5563;
`

const DetailsLink = styled.a`
    display: flex;
    align-items: center;
    gap: 8px;
    padding-bottom: 10px;
    color: #2563eb;
    text-decoration: none;
    span{
        text-decoration: underline;
    }
`

const CloseButton = styled.button`
    margin-left: auto;
    color: #9ca3af;
`

const ModalBody = styled.div`
    padding: 50px 48px 46px;
    color: #374151;
    font-size: 31px;
    line-height: 48px;
`

const DockArea = styled.footer`
    padding: 2px 0 10px;
    display: flex;
    justify-content: center;
`

const Dock = styled.div`
    position: relative;
    height: 148px;
    padding: 0 4px;
    display: flex;
    align-items: center;
    border: 2px solid rgba(255, 255, 255, 0.2);
    border-radius: 44px;
    background: linear-gradient(90deg, #1d1533 0%, #201240 35%, #26124a 52%, #45146a 62%, #48146c 70%, #3f145f 80%, #231147 100%);
    box-shadow: 0 0 30px rgba(0, 0, 0, 0.25);
`

const DockButton = styled.button`
    position: relative;
    width: 126px;
    height: 144px;
    padding-bottom: 10px;
    display: grid;
    place-items: center;
`

const DockBadge = styled.span`
    position: absolute;
    top: 10px;
    right: 0;
    width: 44px;
    height: 44px;
    border-radius: 50%;
    background: #e8503f;
    color: #fff;
    font-size: 26px;
    line-height: 44px;
`

const RunningDot = styled.i`
    position: absolute;
    bottom: 2px;
    left: 59px;
    width: 8px;
    height: 8px;
    border-radius: 50%;
    background: #b394d6;
`

const MiniApp = styled.span`
    position: absolute;
    right: 10px;
    bottom: 22px;
`

const DockRule = styled.span`
    width: 2px;
    height: 108px;
    margin: 0 28px;
    background: #7b4f9c;
`

export default App
